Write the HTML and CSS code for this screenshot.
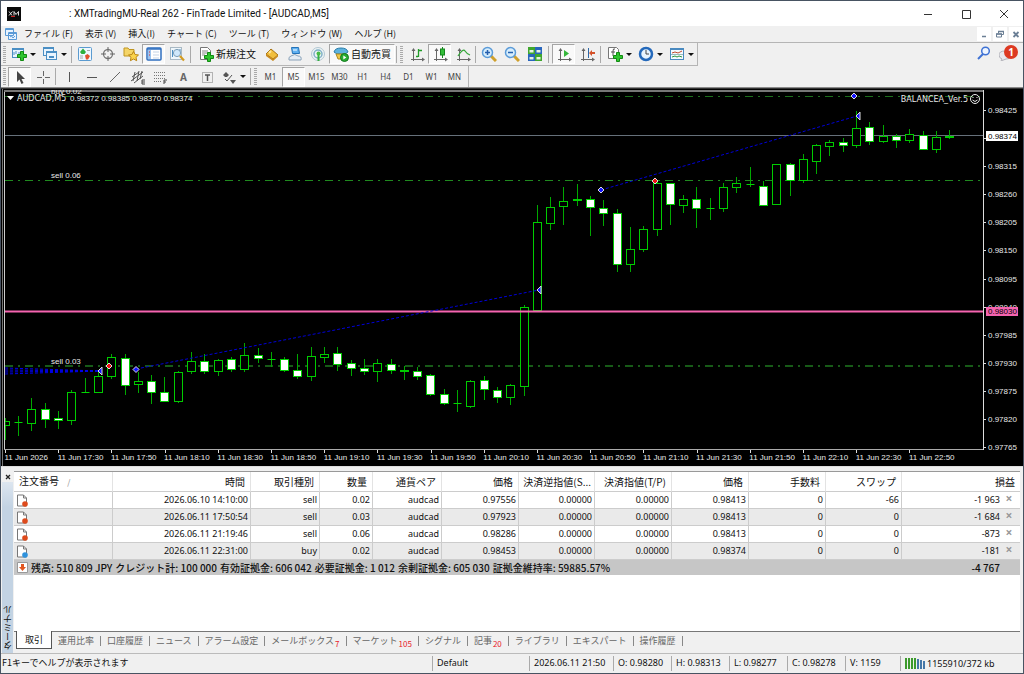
FILE: index.html
```html
<!DOCTYPE html>
<html lang="ja">
<head>
<meta charset="utf-8">
<title>XMTradingMU-Real 262 - FinTrade Limited - [AUDCAD,M5]</title>
<link rel="stylesheet" href="styles.css">
</head>
<body>
<svg class="defs" aria-hidden="true">
  <symbol id="i-plus" viewBox="0 0 10 10"><path d="M3.500.5h3v3h3v3h-3v3h-3v-3h-3v-3h3z" fill="#2fc52f" stroke="#118a11"/></symbol>
  <symbol id="i-chart" viewBox="0 0 16 16"><rect x="1.500" y="2.500" width="11" height="9" fill="#eaf5ff" stroke="#4b8fc4"/><path d="M1 3h12" stroke="#4b8fc4" stroke-width="2"/><path d="M3 9V6M5 8V5M8 9V6" stroke="#4b8fc4"/><use href="#i-plus" x="6" y="5" width="10" height="10"/></symbol>
  <symbol id="i-profiles" viewBox="0 0 16 16"><g fill="#eaf5ff" stroke="#4b8fc4"><rect x="1.500" y="1.500" width="10" height="8"/><rect x="4.500" y="5.500" width="10" height="8"/></g><path d="M1 2h11M4 6h11" stroke="#4b8fc4" stroke-width="2"/><path d="M7 11h5" stroke="#4b8fc4" stroke-width="2"/></symbol>
  <symbol id="i-market" viewBox="0 0 16 16"><rect x="1.500" y="1.500" width="13" height="13" rx="1" fill="#eef7ff" stroke="#5b9bd0"/><path d="M3 6l3-3.500 3 3.500-1.500 2h-3z" fill="#2eaf3d"/><path d="M8 9.500l2.500-1.500 2.500 2-2 3.500H9z" fill="#e2502a"/><path d="M10 4.500h3M3 10h3M3 12h3" stroke="#aaa"/></symbol>
  <symbol id="i-target" viewBox="0 0 16 16"><circle cx="8" cy="8" r="4.500" fill="none" stroke="#777" stroke-width="1.300"/><path d="M8 1v5M8 10v5M1 8h5M10 8h5" stroke="#666"/></symbol>
  <symbol id="i-navi" viewBox="0 0 16 16"><path d="M1 2h4l1 1.500h5V10H1z" fill="#f5d568" stroke="#bf9520"/><path d="M10.500 5.500l1.600 3 3.400.5-2.500 2.300.7 3.400-3.200-1.700-3.100 1.700.6-3.400L5.500 9l3.400-.5z" fill="#fbd34c" stroke="#b98414"/></symbol>
  <symbol id="i-terminal" viewBox="0 0 16 16"><rect x="1" y="2" width="14" height="12" rx="1" fill="#fff" stroke="#2f6fc0" stroke-width="1.500"/><path d="M1 3h14" stroke="#2f6fc0" stroke-width="1.500"/><path d="M2 4h3v9H2z" fill="#9cc3ee"/><path d="M7 6h6M7 9h6M7 12h6" stroke="#c3d3e6"/><path d="M3 6h1M3 9h1" stroke="#d33"/></symbol>
  <symbol id="i-tester" viewBox="0 0 16 16"><rect x="1.500" y="1.500" width="11" height="12" fill="#eef6fb" stroke="#a9b9c4"/><path d="M3.500 4v7M11 3v5" stroke="#4b8fc4"/><circle cx="8" cy="7" r="3.600" fill="#cfe8fb" stroke="#7d9db5"/><path d="M11 10l4 4.500" stroke="#d59c20" stroke-width="2.200"/></symbol>
  <symbol id="i-order" viewBox="0 0 16 16"><path d="M2.500 1.500h7l3 3v9h-10z" fill="#fff" stroke="#777"/><path d="M4 5h6M4 7h6M4 9h3" stroke="#888"/><use href="#i-plus" x="6" y="6" width="10" height="10"/></symbol>
  <symbol id="i-gold" viewBox="0 0 16 16"><path d="M2 8l5-5 7 6-5 4z" fill="#f2bf3d" stroke="#a87416"/><path d="M2 8v2l7 5 5-4.500V9l-5 4z" fill="#c98a1d"/><path d="M5 7l2-2" stroke="#ffe59a" stroke-width="2"/></symbol>
  <symbol id="i-user" viewBox="0 0 16 16"><path d="M4.500 1.500h7l1 6h-7z" fill="#5fb1f2" stroke="#2472b8"/><path d="M6 4h4" stroke="#fff"/><path d="M2 14q-1-3 2-4 4-3 7 0 4 0 3 4z" fill="#e6edf4" stroke="#8aa2b9"/></symbol>
  <symbol id="i-signal" viewBox="0 0 16 16"><circle cx="8" cy="8" r="6.500" fill="#eef3f5" stroke="#b2c8d2"/><circle cx="8" cy="8" r="4" fill="none" stroke="#7fb0c6" stroke-width="1.500"/><path d="M7.500 7v8h2V7" fill="#36b03f"/><circle cx="8.500" cy="7.500" r="2" fill="#46bb45"/></symbol>
  <symbol id="i-auto" viewBox="0 0 16 16"><path d="M1 6q1-4 7-4t7 4l-3 2H4z" fill="#5eb3df" stroke="#2a7ca8"/><path d="M3 8h10l-2 5H5z" fill="#f0c849" stroke="#b18a1d"/><circle cx="11.500" cy="11.500" r="4" fill="#29ad33" stroke="#11791b"/><path d="M10.300 9.500v4l3-2z" fill="#fff"/></symbol>
  <symbol id="i-axes" viewBox="0 0 16 16"><path d="M4.500 3v12M2 13.500h12" fill="none" stroke="#666"/><path d="M2.500 5l2-3 2 3zM13 11.500l3 2-3 2z" fill="#666"/></symbol>
  <symbol id="i-bars" viewBox="0 0 16 16"><use href="#i-axes"/><path d="M9.500 3v8M7 10.500h2M10 4.500h3" stroke="#209b27" stroke-width="1.300" fill="none"/></symbol>
  <symbol id="i-candle" viewBox="0 0 16 16"><use href="#i-axes"/><path d="M10.500 1v11" stroke="#15851c"/><rect x="8.500" y="3" width="4" height="6" fill="#31bd38" stroke="#15851c"/></symbol>
  <symbol id="i-line" viewBox="0 0 16 16"><use href="#i-axes"/><path d="M3 10q5-8 7-5t5 4" fill="none" stroke="#35a83a" stroke-width="1.300"/></symbol>
  <symbol id="i-zin" viewBox="0 0 16 16"><path d="M10 10l5 5" stroke="#cfa02b" stroke-width="3"/><circle cx="6.500" cy="6.500" r="5" fill="#d6edfc" stroke="#5b9bd8" stroke-width="1.500"/><path d="M4 6.500h5M6.500 4v5" stroke="#245fae" stroke-width="1.500"/></symbol>
  <symbol id="i-zout" viewBox="0 0 16 16"><path d="M10 10l5 5" stroke="#cfa02b" stroke-width="3"/><circle cx="6.500" cy="6.500" r="5" fill="#d6edfc" stroke="#5b9bd8" stroke-width="1.500"/><path d="M4 6.500h5" stroke="#245fae" stroke-width="1.500"/></symbol>
  <symbol id="i-tile" viewBox="0 0 16 16"><path d="M1 1h7v7H1zM8 8h7v7H8z" fill="#40a72e"/><path d="M8 1h7v7H8zM1 8h7v7H1z" fill="#2866bd"/><path d="M2.500 4h4v2.500h-4zM9.500 4h4v2.500h-4zM2.500 11h4v2.500h-4zM9.500 11h4v2.500h-4z" fill="#e5f3e4"/></symbol>
  <symbol id="i-scroll" viewBox="0 0 16 16"><use href="#i-axes"/><path d="M8 4l5 3.500-5 3.500z" fill="#35b73b"/></symbol>
  <symbol id="i-shift" viewBox="0 0 16 16"><use href="#i-axes"/><path d="M9.500 2v10" stroke="#2d68a8"/><path d="M10 7l3-3v2h3v2h-3v2z" fill="#d4512a"/></symbol>
  <symbol id="i-ind" viewBox="0 0 16 16"><path d="M1.500 1.500h8l2 2v9h-10z" fill="#fff" stroke="#777"/><path d="M8 3q-2-1-2 2v5M4 6h4" fill="none" stroke="#555"/><use href="#i-plus" x="6" y="6" width="10" height="10"/></symbol>
  <symbol id="i-clock" viewBox="0 0 16 16"><circle cx="8" cy="8" r="6" fill="#e8f4ff" stroke="#2469bb" stroke-width="2.500"/><path d="M8 4v4h3" fill="none" stroke="#444"/></symbol>
  <symbol id="i-templ" viewBox="0 0 16 16"><rect x="1.500" y="2.500" width="13" height="11" fill="#f4faff" stroke="#4a8ac0"/><path d="M1 3h14" stroke="#4a8ac0" stroke-width="2"/><path d="M3 7l3-1 3 1 4-2" fill="none" stroke="#c24a2d"/><path d="M3 11l3-1 2 1 2-1 3 1" fill="none" stroke="#29953a"/><path d="M2 8.500h12" stroke="#9bb"/></symbol>
  <symbol id="i-cursor" viewBox="0 0 16 16"><path d="M5 2v11l2.500-2.500L9.500 15l2-1-2-4H13z" fill="#444"/></symbol>
  <symbol id="i-cross" viewBox="0 0 16 16"><path d="M8.500 2v5M8.500 10v5M2 8.500h5M10 8.500h5" stroke="#666"/></symbol>
  <symbol id="i-v" viewBox="0 0 16 16"><path d="M8.500 3v10" stroke="#555"/></symbol>
  <symbol id="i-h" viewBox="0 0 16 16"><path d="M3 8.500h10" stroke="#555"/></symbol>
  <symbol id="i-trend" viewBox="0 0 16 16"><path d="M3 13L13 3" stroke="#666"/></symbol>
  <symbol id="i-chan" viewBox="0 0 16 16"><path d="M1 12L13 3M2 8l7-5M4 14l9-7M5 3L3 12M9 2L7 12M12 2l-2 8" fill="none" stroke="#555"/><path d="M15 11h-3v4h3M12 13h3" fill="none" stroke="#444"/></symbol>
  <symbol id="i-fib" viewBox="0 0 16 16"><path d="M1 3.500h12M1 6.500h12M1 9.500h12M1 12.500h7" stroke="#777" stroke-dasharray="1 1"/><path d="M14 11h-3v4M11 13h2" fill="none" stroke="#444"/></symbol>
  <symbol id="i-label" viewBox="0 0 16 16"><rect x="3.500" y="3.500" width="10" height="10" fill="none" stroke="#777" stroke-dasharray="1 1"/><path d="M6 6h5M8.500 6v6" stroke="#555" stroke-width="1.500"/></symbol>
  <symbol id="i-arrows" viewBox="0 0 16 16"><path d="M2 6l3-3 3 3-2 2H4zM9 11h6l-3 4z" fill="#555"/><path d="M4 10l2 2 5-6" fill="none" stroke="#555"/></symbol>
  <symbol id="i-doc" viewBox="0 0 12 13"><path d="M1.500 1h6l3 3v8h-9z" fill="#fff" stroke="#777"/><path d="M7.500 1v3h3" fill="none" stroke="#777"/></symbol>
</svg>

<div class="window">
  <header class="titlebar">
    <svg class="logo" viewBox="0 0 14 14"><path d="M0 0h14v14H0z" fill="#0a0a0a"/><path d="M2 4.500l3 4M5.500 4.500l-3.500 4M7 8.500v-4l2 3 2.500-3v4" stroke="#ddd" fill="none"/><path d="M4 9.500h4" stroke="#c22"/></svg>
    <h1 class="title">: XMTradingMU-Real 262 - FinTrade Limited - [AUDCAD,M5]</h1>
    <div class="winbtns">
      <button class="winbtn" aria-label="最小化"><svg viewBox="0 0 12 12"><path d="M2 6.500h8" stroke="#333"/></svg></button>
      <button class="winbtn" aria-label="最大化"><svg viewBox="0 0 12 12"><path d="M2.500 2.500h8v8h-8z" stroke="#333" fill="none"/></svg></button>
      <button class="winbtn" aria-label="閉じる"><svg viewBox="0 0 12 12"><path d="M2 2l8 8M10 2l-8 8" stroke="#333"/></svg></button>
    </div>
  </header>

  <nav class="menubar">
    <svg class="menuicon" viewBox="0 0 12 12"><path d="M.5.5h8v7h-8zM3.500 4.500h8v7h-8z" fill="#e7f3ff" stroke="#5a9ad6"/><path d="M0 1.500h9M3 5.500h9" stroke="#5a9ad6"/><path d="M5 9l1.500-1L8 10l2-2" stroke="#5a9ad6" fill="none"/></svg>
    <button>ファイル (F)</button><button>表示 (V)</button><button>挿入(I)</button><button>チャート (C)</button><button>ツール (T)</button><button>ウィンドウ (W)</button><button>ヘルプ (H)</button>
    <div class="mdi">
      <button aria-label="ウィンドウを最小化"><svg viewBox="0 0 10 10"><path d="M3 7.500h4" stroke="#6b7f95" stroke-width="1.500"/></svg></button>
      <button aria-label="ウィンドウを元に戻す"><svg viewBox="0 0 10 10"><path d="M3.500 4V2.500h5v3H7M1.500 5h5v3h-5z" fill="none" stroke="#6b7f95"/><path d="M3 2.500h6M1 5h6" stroke="#6b7f95" stroke-width="1.500"/></svg></button>
      <button aria-label="ウィンドウを閉じる"><svg viewBox="0 0 10 10"><path d="M2.500 3l5 5M7.500 3l-5 5" stroke="#6b7f95" stroke-width="1.800"/></svg></button>
    </div>
  </nav>

  <div class="bars">
    <div class="toolbar first">
      <i class="grip"></i>
      <button class="tool drop" aria-label="新規チャート"><svg><use href="#i-chart"/></svg></button>
      <button class="tool drop" aria-label="プロファイル"><svg><use href="#i-profiles"/></svg></button>
      <i class="sep"></i>
      <button class="tool" aria-label="気配値"><svg><use href="#i-market"/></svg></button>
      <button class="tool" aria-label="データウィンドウ"><svg><use href="#i-target"/></svg></button>
      <button class="tool" aria-label="ナビゲーター"><svg><use href="#i-navi"/></svg></button>
      <button class="tool on" aria-label="ターミナル"><svg><use href="#i-terminal"/></svg></button>
      <button class="tool" aria-label="ストラテジーテスター"><svg><use href="#i-tester"/></svg></button>
      <i class="sep wide"></i>
      <button class="tool text"><svg><use href="#i-order"/></svg>新規注文</button>
      <button class="tool" aria-label="MetaEditor"><svg><use href="#i-gold"/></svg></button>
      <button class="tool" aria-label="コミュニティ"><svg><use href="#i-user"/></svg></button>
      <button class="tool" aria-label="シグナル配信"><svg><use href="#i-signal"/></svg></button>
      <button class="tool text on"><svg><use href="#i-auto"/></svg>自動売買</button>
      <i class="sep"></i>
      <i class="grip"></i>
      <button class="tool" aria-label="バーチャート"><svg><use href="#i-bars"/></svg></button>
      <button class="tool on" aria-label="ローソク足"><svg><use href="#i-candle"/></svg></button>
      <button class="tool" aria-label="ラインチャート"><svg><use href="#i-line"/></svg></button>
      <i class="sep"></i>
      <button class="tool" aria-label="ズームイン"><svg><use href="#i-zin"/></svg></button>
      <button class="tool" aria-label="ズームアウト"><svg><use href="#i-zout"/></svg></button>
      <button class="tool" aria-label="並べて表示"><svg><use href="#i-tile"/></svg></button>
      <i class="sep wide"></i>
      <button class="tool on" aria-label="自動スクロール"><svg><use href="#i-scroll"/></svg></button>
      <button class="tool" aria-label="チャートシフト"><svg><use href="#i-shift"/></svg></button>
      <i class="sep wide"></i>
      <button class="tool drop" aria-label="インディケータ"><svg><use href="#i-ind"/></svg></button>
      <button class="tool drop" aria-label="時間軸"><svg><use href="#i-clock"/></svg></button>
      <button class="tool drop" aria-label="定型チャート"><svg><use href="#i-templ"/></svg></button>
    </div>
    <div class="notice">
      <button class="tool" aria-label="検索"><svg viewBox="0 0 16 16"><circle cx="9.500" cy="6" r="3.800" fill="#eef5ff" stroke="#3f72d4" stroke-width="1.500"/><path d="M7 9l-5 5" stroke="#3f72d4" stroke-width="2"/></svg></button>
      <button class="tool chat" aria-label="通知"><svg viewBox="0 0 16 16"><path d="M0 10q0-4 6-4t6 4-5 4l-5 2 1-2q-3-1-3-4z" fill="#e9e9ee" stroke="#b4b4bb"/></svg><span class="badge">1</span></button>
    </div>
    <div class="toolbar second">
      <i class="grip"></i>
      <button class="tool on" aria-label="カーソル"><svg><use href="#i-cursor"/></svg></button>
      <button class="tool" aria-label="十字カーソル"><svg><use href="#i-cross"/></svg></button>
      <i class="sep"></i>
      <button class="tool" aria-label="垂直線"><svg><use href="#i-v"/></svg></button>
      <button class="tool" aria-label="水平線"><svg><use href="#i-h"/></svg></button>
      <button class="tool" aria-label="トレンドライン"><svg><use href="#i-trend"/></svg></button>
      <button class="tool" aria-label="等距離チャネル"><svg><use href="#i-chan"/></svg></button>
      <button class="tool" aria-label="フィボナッチ"><svg><use href="#i-fib"/></svg></button>
      <button class="tool letter">A</button>
      <button class="tool" aria-label="テキストラベル"><svg><use href="#i-label"/></svg></button>
      <button class="tool drop" aria-label="矢印"><svg><use href="#i-arrows"/></svg></button>
      <i class="sep"></i>
      <i class="grip"></i>
      <button class="tool tf">M1</button><button class="tool tf on">M5</button><button class="tool tf">M15</button><button class="tool tf">M30</button><button class="tool tf">H1</button><button class="tool tf">H4</button><button class="tool tf">D1</button><button class="tool tf">W1</button><button class="tool tf">MN</button>
    </div>
  </div>

  <main class="chart">
    <svg id="chart" viewBox="1 88 1022 379" role="img" aria-label="AUDCAD M5"></svg>
  </main>

  <section class="terminal">
    <aside class="side"><button class="sideclose" aria-label="閉じる"><svg viewBox="0 0 8 8"><path d="M2 2l4 4M6 2L2 6" stroke="#222" stroke-width="1.300"/></svg></button><span class="sidename">ターミナル</span></aside>
    <div class="panel">
      <table class="orders">
        <colgroup><col class="c-id"><col class="c-time"><col class="c-type"><col class="c-lot"><col class="c-type"><col class="c-num"><col class="c-stop"><col class="c-num"><col class="c-num"><col class="c-num"><col class="c-stop"><col></colgroup>
        <thead><tr><th class="left">注文番号 <span class="sort">/</span></th><th>時間</th><th>取引種別</th><th>数量</th><th>通貨ペア</th><th>価格</th><th class="tight">決済逆指値(S...</th><th>決済指値(T/P)</th><th>価格</th><th>手数料</th><th>スワップ</th><th>損益</th></tr></thead>
        <tbody>
          <tr><td class="left"><svg class="doc" viewBox="0 0 12 13"><use href="#i-doc"/><circle cx="9" cy="10" r="2.800" fill="#dd4a1c"/></svg></td><td>2026.06.10 14:10:00</td><td>sell</td><td>0.02</td><td>audcad</td><td>0.97556</td><td>0.00000</td><td>0.00000</td><td>0.98413</td><td>0</td><td>-66</td><td>-1 963<button class="x" aria-label="決済">×</button></td></tr>
          <tr><td class="left"><svg class="doc" viewBox="0 0 12 13"><use href="#i-doc"/><circle cx="9" cy="10" r="2.800" fill="#dd4a1c"/></svg></td><td>2026.06.11 17:50:54</td><td>sell</td><td>0.03</td><td>audcad</td><td>0.97923</td><td>0.00000</td><td>0.00000</td><td>0.98413</td><td>0</td><td>0</td><td>-1 684<button class="x" aria-label="決済">×</button></td></tr>
          <tr><td class="left"><svg class="doc" viewBox="0 0 12 13"><use href="#i-doc"/><circle cx="9" cy="10" r="2.800" fill="#dd4a1c"/></svg></td><td>2026.06.11 21:19:46</td><td>sell</td><td>0.06</td><td>audcad</td><td>0.98286</td><td>0.00000</td><td>0.00000</td><td>0.98413</td><td>0</td><td>0</td><td>-873<button class="x" aria-label="決済">×</button></td></tr>
          <tr><td class="left"><svg class="doc" viewBox="0 0 12 13"><use href="#i-doc"/><circle cx="9" cy="10" r="2.800" fill="#2f92dc"/></svg></td><td>2026.06.11 22:31:00</td><td>buy</td><td>0.02</td><td>audcad</td><td>0.98453</td><td>0.00000</td><td>0.00000</td><td>0.98374</td><td>0</td><td>0</td><td>-181<button class="x" aria-label="決済">×</button></td></tr>
        </tbody>
      </table>
      <div class="summary">
        <svg class="sumicon" viewBox="0 0 11 11"><path d="M.5.5h10v10H.5z" fill="#fff" stroke="#999"/><path d="M4 2h3v3h2L5.500 9 2 5h2z" fill="#e2561f"/></svg>
        <span>残高: 510 809 JPY</span><span>クレジット計: 100 000</span><span>有効証拠金: 606 042</span><span>必要証拠金: 1 012</span><span>余剰証拠金: 605 030</span><span>証拠金維持率: 59885.57%</span><span class="total">-4 767</span>
      </div>
      <div class="blank"></div>
      <div class="tabs">
        <button class="tab active">取引</button><button class="tab">運用比率</button><button class="tab">口座履歴</button><button class="tab">ニュース</button><button class="tab">アラーム設定</button><button class="tab">メールボックス<sub>7</sub></button><button class="tab">マーケット<sub>105</sub></button><button class="tab">シグナル</button><button class="tab">記事<sub>20</sub></button><button class="tab">ライブラリ</button><button class="tab">エキスパート</button><button class="tab">操作履歴</button>
      </div>
    </div>
  </section>

  <footer class="status">
    <span class="help">F1キーでヘルプが表示されます</span><span class="s-prof">Default</span><span class="s-time">2026.06.11 21:50</span><span class="s-num">O: 0.98280</span><span class="s-num">H: 0.98313</span><span class="s-num">L: 0.98277</span><span class="s-num">C: 0.98278</span><span class="s-vol">V: 1159</span><span class="s-net"><svg viewBox="0 0 20 11"><path d="M1 0v11M4 0v11M7 0v11M10 0v11" stroke="#3c9a2c" stroke-width="2"/><path d="M13 1v10M16 2v9M19 3v8" stroke="#4577a8" stroke-width="2"/></svg>1155910/372 kb</span>
  </footer>
</div>
<script src="chart.js"></script>
</body>
</html>
```
FILE: styles.css
```css
* { box-sizing: border-box; }
body { margin: 0; font: 10px/14px "Noto Sans", "Noto Sans CJK JP", sans-serif; color: #111; }
button { font: inherit; color: inherit; background: none; border: 0; padding: 0; margin: 0; white-space: nowrap; }
.defs { display: none; }
.window { display: flex; flex-direction: column; min-height: 100vh; border: 1px solid #485362; background: #f0f0f0; }

.titlebar { display: flex; align-items: center; height: 25px; background: #fff; padding-left: 6px; }
.logo { width: 14px; height: 14px; }
.title { margin: 0 auto 0 48px; font: 10px/14px Roboto, "Noto Sans", sans-serif; white-space: nowrap; }
.winbtns { display: flex; }
.winbtn { width: 38px; height: 24px; display: grid; place-items: center; }
.winbtn svg { width: 12px; height: 12px; }

.menubar { display: flex; align-items: center; gap: 12px; height: 17px; padding-left: 4px; border-bottom: 1px solid #b5b5b5; font: 9px/14px "Noto Sans CJK JP", sans-serif; }
.menuicon { width: 12px; height: 12px; margin-right: -5px; }
.mdi { display: flex; gap: 2px; margin-left: auto; }
.mdi button { width: 14px; height: 14px; background: #fff; display: grid; place-items: center; }
.mdi svg { width: 10px; height: 10px; }

.bars { display: grid; grid-template-columns: max-content 1fr; grid-template-rows: 23px 21px; justify-items: start; border-bottom: 1px solid #8a8a8a; }
.toolbar { display: flex; align-items: center; border-right: 1px solid #b5b5b5; }
.first { border-bottom: 1px solid #b5b5b5; }
.second { grid-column: 1 / -1; padding-right: 2px; }
.grip { width: 3px; height: 17px; margin: 0 2px; background: repeating-linear-gradient(#aaa 0 1px, #f0f0f0 1px 2px); }
.sep { width: 1px; height: 17px; margin: 0 1px; background: #aaa; }
.wide { margin: 0 3px 0 2px; }
.tool { display: flex; align-items: center; justify-content: center; width: 23px; height: 20px; }
.tool svg { width: 16px; height: 16px; flex: none; }
.on { background: #f9f9f9; border: 1px solid; border-color: #a5a5a5 #fff #fff #a5a5a5; }
.drop { width: 31px; gap: 3px; }
.drop::after { content: ""; border: 3px solid transparent; border-top-color: #111; border-bottom: 0; }
.text { width: 66px; gap: 2px; font-family: "Noto Sans CJK JP", sans-serif; }
.letter { font-weight: 700; color: #666; }
.tf { font-size: 8px; color: #444; }
.notice { display: flex; justify-self: end; padding-right: 5px; }
.chat { position: relative; }
.badge { position: absolute; right: 0; top: 2px; width: 14px; height: 14px; border-radius: 50%; background: #dd3a22; color: #fff; font-weight: 700; }

.chart { background: #000; }
.chart svg { display: block; width: 100%; height: auto; font: 8px "Liberation Sans", sans-serif; fill: #e8e8e8; }
.chart .label { font-family: "DejaVu Sans", sans-serif; }

.terminal { flex: 1; display: flex; padding: 4px 3px 0 1px; }
.side { display: flex; flex-direction: column; justify-content: space-between; width: 11px; background: linear-gradient(#e8eef5, #c3d3e3 20%, #c3d3e3); }
.sideclose { width: 11px; height: 11px; background: #f0f0f0; display: grid; place-items: center; }
.sideclose svg { width: 8px; height: 8px; }
.sidename { writing-mode: vertical-rl; transform: rotate(180deg); font: 9px/11px "Noto Sans CJK JP", sans-serif; padding-top: 3px; }
.panel { flex: 1; display: flex; flex-direction: column; margin-left: 1px; min-width: 0; border-top: 1px solid #999; }
.orders { width: 100%; table-layout: fixed; border-collapse: separate; border-spacing: 0; background: #fff; }
.c-id { width: 99px; } .c-time { width: 138px; } .c-type { width: 69px; } .c-lot { width: 53px; } .c-num { width: 77px; } .c-stop { width: 76px; }
.orders th { height: 20px; padding: 0 5px 0 0; border-right: 1px solid #e3e3e3; border-bottom: 1px solid #ccc; font: 10px/14px "Noto Sans CJK JP", sans-serif; text-align: right; white-space: nowrap; }
.orders th.left { text-align: left; padding-left: 5px; }
.orders th.tight { padding-right: 3px; }
.sort { margin-left: 6px; color: #888; font-size: 8px; }
.orders td { height: 17px; padding: 0 2px 0 0; border-right: 1px solid #ccc; border-bottom: 1px solid #ccc; font-size: 9px; line-height: 14px; text-align: right; }
.orders td.left { text-align: left; padding-left: 2px; }
.orders tbody tr:nth-child(even) { background: #eaeaea; }
.orders tr > :last-child { border-right: 0; }
.doc { display: block; width: 12px; height: 13px; }
.x { width: 18px; font-size: 12px; line-height: 12px; color: #999; font-weight: 700; text-align: center; }
.summary { display: flex; align-items: center; gap: 3px; height: 15px; padding: 0 20px 0 3px; background: #c6c6c6; font: 500 10px/14px "Noto Sans CJK JP", sans-serif; white-space: nowrap; }
.sumicon { width: 11px; height: 11px; }
.total { margin-left: auto; }
.blank { flex: 1; background: #fff; }
.tabs { display: flex; height: 22px; padding-left: 2px; border-top: 1px solid #777; font: 9px/14px "Noto Sans CJK JP", sans-serif; color: #666; }
.tab { position: relative; height: 17px; padding: 0 7px 0 6px; }
.tab:not(.active)::after { content: ""; position: absolute; right: 0; top: 4px; height: 10px; border-right: 1px solid #888; }
.active { background: #fff; color: #111; border: 1px solid #555; border-top: 0; margin-top: -1px; height: 18px; padding: 0 8px; }
.tab sub { color: #e8202a; font-size: 8px; line-height: 8px; vertical-align: -3px; margin-left: 1px; }

.status { display: flex; align-items: center; height: 20px; border-top: 1px solid #bbb; font-size: 9px; white-space: nowrap; }
.status span { height: 15px; padding-left: 4px; border-left: 1px solid #aaa; }
.status .help { flex: 1; border: 0; padding-left: 1px; font-family: "Noto Sans CJK JP", sans-serif; }
.s-prof { width: 97px; } .s-time { width: 84px; } .s-num { width: 58px; } .s-vol { width: 55px; }
.s-net { width: 123px; display: flex; align-items: center; gap: 2px; }
.s-net svg { width: 20px; height: 11px; }
```
FILE: chart.js
```js
const svg = document.getElementById('chart');
const out = [];
const line = (x1, y1, x2, y2, stroke, extra = '') =>
  out.push(`<line x1="${x1}" y1="${y1}" x2="${x2}" y2="${y2}" stroke="${stroke}" ${extra}/>`);
const text = (x, y, s, extra = '') => out.push(`<text x="${x}" y="${y}" ${extra}>${s}</text>`);

/* high, body top, body bottom, low, filled */
const candles = [
  [418,421,425,439,0],[416,422,422,435,0],[398,409,423,430,0],[403,409,419,427,1],[411,418,420,428,1],
  [390,392,420,424,0],[378,392,392,392,0],[371,376,392,392,0],[354,357,376,378,0],[354,358,385,394,1],
  [372,381,384,392,0],[375,381,392,403,1],[377,392,401,401,1],[371,372,401,402,0],[352,361,371,373,0],
  [354,361,371,373,1],[359,360,371,375,0],[357,359,369,371,1],[343,355,369,371,0],[348,355,358,362,1],
  [352,359,359,366,0],[357,359,370,371,1],[354,370,376,378,1],[347,356,376,380,0],[347,354,357,362,0],
  [347,353,364,370,1],[360,363,368,375,1],[359,368,371,374,1],[359,363,371,381,0],[359,364,370,373,1],
  [366,370,371,379,1],[367,371,376,379,1],[374,375,394,395,1],[389,394,403,404,1],[390,403,403,411,0],
  [380,381,406,407,0],[376,380,389,399,1],[387,390,397,402,1],[384,385,397,404,0],[305,307,386,395,0],
  [205,222,310,310,0],[197,207,223,229,0],[187,201,206,224,0],[184,199,200,205,0],[196,199,207,235,1],
  [200,208,213,225,1],[209,213,264,271,1],[227,249,264,271,0],[226,229,249,251,0],[180,183,229,235,0],
  [183,183,204,224,1],[195,199,205,212,0],[187,199,208,227,1],[198,208,208,219,0],[183,187,208,211,0],
  [177,183,187,192,0],[167,184,184,186,0],[181,186,205,205,1],[164,164,204,204,0],[163,164,180,195,1],
  [154,159,180,182,0],[144,145,161,173,0],[140,142,146,155,0],[138,142,145,151,1],[111,128,145,147,0],
  [122,127,141,144,1],[125,136,141,142,0],[134,136,140,147,1],[129,134,140,142,0],[131,135,149,149,1],
  [131,137,149,152,0],[130,136,137,138,0]
];

line(2.5, 88, 2.5, 467, '#777');
line(1, 88.5, 1023, 88.5, '#333');
line(1, 466.5, 1023, 466.5, '#ddd');

const dash = 'stroke-dasharray="8 5 2 5"';
line(5, 96.5, 983, 96.5, '#1c701c', dash);
line(5, 180.5, 983, 180.5, '#1f8a1f', dash);
line(5, 366, 983, 366, '#175a17', 'stroke-width="2" ' + dash);
line(5, 135.5, 983, 135.5, '#66707a');

candles.forEach(([h, a, b, l, filled], i) => {
  const x = Math.round(5.3 + 13.3 * i - 0.5) + 0.5;
  const left = Math.max(x - 4, 5);
  line(x, h, x, a, '#00a800');
  line(x, b + 1, x, l + 1, '#00a800');
  out.push(`<rect x="${left}" y="${a + 0.5}" width="${x + 4 - left}" height="${b - a}" fill="${filled ? '#fff' : '#000'}" stroke="#00cc00"/>`);
  if (a === b) line(x - 4, a + 0.5, x + 4, a + 0.5, '#00d800');
});

line(5, 311.5, 983, 311.5, '#f564b0', 'stroke-width="2"');

const trade = 'stroke-dasharray="3 2"';
line(136, 369, 539, 290, '#0000d8', trade);
line(601, 190, 857, 116, '#0000d8', trade);
[368, 370, 372, 374].forEach(y => line(5, y, 100, 371, '#0000e8', trade));

const diamond = (x, y, c) => out.push(`<path d="M${x} ${y - 3}l3 3-3 3-3-3z" fill="${c}" stroke="#ddd"/>`);
const tri = (x, y) => out.push(`<path d="M${x + 2} ${y - 4}v8l-4-4z" fill="#1414ff" stroke="#ddd"/>`);
diamond(109, 366, '#f01010'); diamond(136, 369.5, '#1414ff'); diamond(601, 190, '#1414ff');
diamond(655, 181, '#f01010'); diamond(854, 96, '#1414ff');
tri(100, 371); tri(539, 290); tri(858, 116);

/* plot frame */
line(4.5, 90, 4.5, 450, '#ccc');
line(4, 91, 984, 91, '#777', 'stroke-width="2"');
line(4, 449.5, 984, 449.5, '#aaa');
line(983.5, 90, 983.5, 450, '#ddd');

out.push('<clipPath id="plot"><rect x="5" y="90" width="978" height="359"/></clipPath>');
text(51, 94, 'buy 0.02', 'clip-path="url(#plot)"');
text(51, 178, 'sell 0.06');
text(51, 364, 'sell 0.03');
out.push('<path d="M7 96h7l-3.500 4z" fill="#fff"/>');
text(17, 101, 'AUDCAD,M5', 'class="label"');
text(70, 101, '0.98372 0.98385 0.98370 0.98374');
text(968, 102, 'BALANCEA_Ver.5', 'text-anchor="end" class="label"');
out.push('<g fill="none" stroke="#eee"><circle cx="975" cy="99" r="4.500"/><path d="M973 98v-1M977 98v-1M972.500 100q2.500 3 5 0"/></g>');

const prices = [['0.98425',110],['0.98370',138],['0.98315',166],['0.98260',194],['0.98205',222],['0.98150',250],['0.98095',279],
  ['0.98040',307],['0.97985',335],['0.97930',363],['0.97875',391],['0.97820',419],['0.97765',447]];
prices.forEach(([p, y]) => { line(984, y + 0.5, 986, y + 0.5, '#ddd'); text(988, y + 3, p); });
out.push('<rect x="986" y="131" width="32" height="10" fill="#fff"/>');
text(988, 139, '0.98374', 'fill="#000"');
out.push('<rect x="986" y="307" width="32" height="9" fill="#f564b0"/>');
text(988, 314, '0.98030', 'fill="#000"');

for (let i = 0; i < 18; i++) {
  const x = 5 + 53.2 * i;
  const m = 17 * 60 + 10 + 20 * i;
  const label = i ? `${Math.floor(m / 60)}:${String(m % 60).padStart(2, '0')}` : '2026';
  line(Math.round(x) + 0.5, 450, Math.round(x) + 0.5, 453, '#ddd');
  text(x - 0.5, 460, `11 Jun ${label}`);
}
svg.innerHTML = out.join('');
```
